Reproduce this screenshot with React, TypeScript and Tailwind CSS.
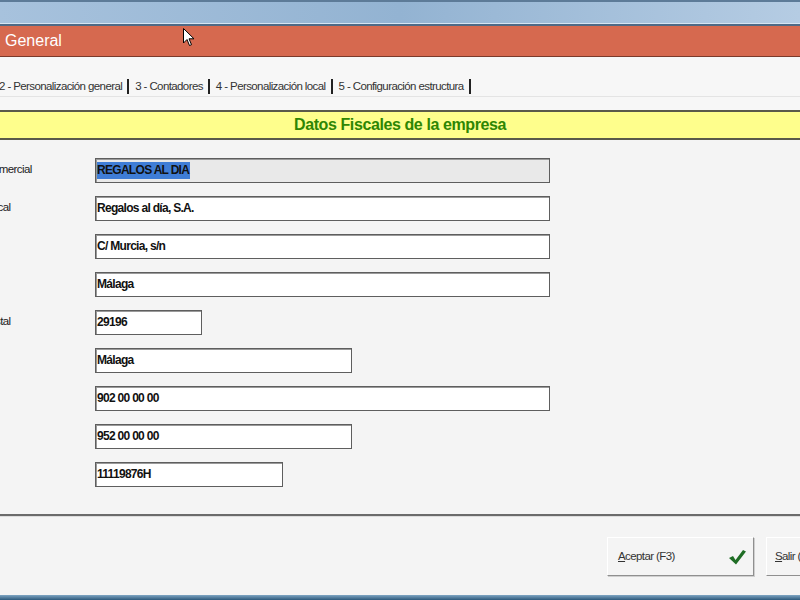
import React from "react";

const sans = { fontFamily: '"Liberation Sans", Arial, sans-serif' };

function Field(p: { label: string; value: string; w: string; selected?: boolean }) {
  return (
    <div className="flex items-center h-[38px]">
      <div className="w-[147px] shrink-0 text-[11.5px] tracking-[-0.6px] text-[#222] whitespace-nowrap">{p.label}</div>
      <div
        className={`${p.w} h-[25px] border border-[#5e5e5e] shadow-[inset_1px_1px_0_#9a9a9a] flex items-center pl-[1px] text-[12px] tracking-[-0.7px] font-bold text-[#111] ${p.selected ? "bg-[#e9e9e9]" : "bg-white"}`}
      >
        <span className={p.selected ? "bg-[#3f7dd6] leading-[17px] pr-[1px]" : ""}>{p.value}</span>
      </div>
    </div>
  );
}

function Tab(p: { label: string }) {
  return (
    <div className="flex items-center">
      <span className="text-[11.5px] tracking-[-0.6px] text-[#333]">{p.label}</span>
      <span className="w-[2px] h-[15px] bg-[#222] ml-[5px] mr-[6px]" />
    </div>
  );
}

export default function App() {
  return (
    <div className="relative w-[800px] h-[600px] overflow-hidden bg-[#f4f4f4] flex flex-col" style={sans}>
      {/* aero glass strip */}
      <div className="h-[26px] shrink-0 border-t-2 border-t-[#5d7b98] border-b-2 border-b-[#4f6a86] bg-gradient-to-r from-[#a7c2dd] via-[#93b3d2] to-[#b5cce3] shadow-[inset_0_-1px_0_#d7e5f2]" />

      {/* red title */}
      <div className="h-[31px] shrink-0 bg-[#d6694f] border-b border-b-[#7b3a2b] flex items-center pl-[5px]">
        <span className="text-white text-[16px]">General</span>
      </div>

      {/* tabs */}
      <div className="h-[53px] shrink-0 bg-[#f7f7f7] flex flex-col">
        <div className="h-[40px] flex items-end border-b border-b-[#e4e4e4] pb-[1px]">
          <div className="flex items-center ml-[-1px]">
            <Tab label="2 - Personalización general" />
            <Tab label="3 - Contadores" />
            <Tab label="4 - Personalización local" />
            <Tab label="5 - Configuración estructura" />
          </div>
        </div>
      </div>

      {/* yellow heading */}
      <div className="h-[30px] shrink-0 bg-[#fefe8c] border-t-2 border-t-[#5a5a4a] border-b-2 border-b-[#5a5a4a] flex items-center justify-center">
        <span className="text-[#2e8603] text-[16px] tracking-[-0.4px] font-bold">Datos Fiscales de la empresa</span>
      </div>

      {/* form */}
      <div className="flex flex-col pt-[11px] ml-[-52px] shrink-0">
        <Field label="Nombre comercial" value="REGALOS AL DIA" w="w-[455px]" selected />
        <Field label="Nombre fiscal" value="Regalos al día, S.A." w="w-[455px]" />
        <Field label="Domicilio" value="C/ Murcia, s/n" w="w-[455px]" />
        <Field label="Población" value="Málaga" w="w-[455px]" />
        <Field label="Código postal" value="29196" w="w-[107px]" />
        <Field label="Provincia" value="Málaga" w="w-[257px]" />
        <Field label="Teléfono" value="902 00 00 00" w="w-[455px]" />
        <Field label="Fax" value="952 00 00 00" w="w-[257px]" />
        <Field label="C.I.F." value="11119876H" w="w-[188px]" />
      </div>

      {/* separator */}
      <div className="mt-[21px] h-[3px] shrink-0 bg-[#6b6b6b] border-b border-b-[#dcdcdc]" />

      {/* buttons */}
      <div className="flex-1 flex items-start justify-end pt-[20px]">
        <div className="flex gap-[12px] mr-[-113px]">
          <button className="w-[147px] h-[39px] flex items-center justify-between pl-[10px] pr-[6px] bg-[#f4f4f4] border border-t-white border-l-white border-r-[#8f8f8f] border-b-[#8f8f8f] shadow-[1px_1px_0_#cfcfcf] text-[11.5px] tracking-[-0.6px] text-[#333]">
            <span><span className="underline">A</span>ceptar (F3)</span>
            <svg width="20" height="18" viewBox="0 0 20 18">
              <path d="M2 10 L6 8 L8.5 12 L16 2 L19 3.5 L9 16.5 Z" fill="#1f6d25" />
            </svg>
          </button>
          <button className="w-[147px] h-[39px] flex items-center pl-[8px] bg-[#f4f4f4] border border-t-white border-l-white border-r-[#8f8f8f] border-b-[#8f8f8f] text-[11.5px] tracking-[-0.6px] text-[#333]">
            <span><span className="underline">S</span>alir (F4)</span>
          </button>
        </div>
      </div>

      {/* taskbar edge */}
      <div className="h-[5px] shrink-0 bg-gradient-to-b from-[#7fa6c3] to-[#2d5a7c]" />

      {/* mouse pointer */}
      <svg className="absolute left-[183px] top-[28px]" width="12" height="19" viewBox="0 0 12 19">
        <path d="M0.5 0.5 L0.5 15 L4 11.5 L6.5 17.5 L8.5 16.7 L6 10.8 L11 10.8 Z" fill="#fff" stroke="#000" strokeWidth="1" />
      </svg>
    </div>
  );
}
